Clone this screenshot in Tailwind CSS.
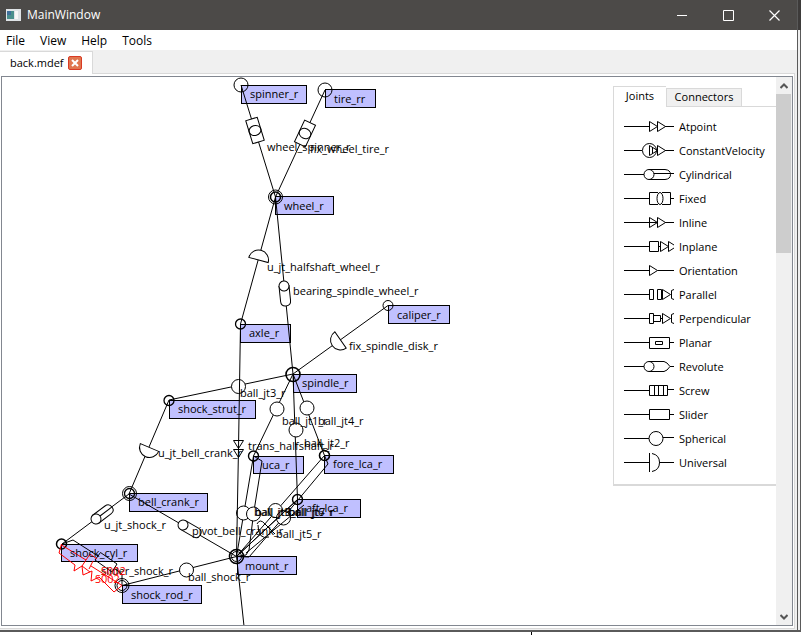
<!DOCTYPE html>
<html lang="en">
<head>
<meta charset="utf-8">
<title>MainWindow</title>
<script src="https://cdn.jsdelivr.net/npm/@tailwindcss/browser@4"></script>
</head>
<body class="flex h-screen flex-col overflow-hidden bg-white font-['Open_Sans','Noto_Sans',sans-serif] text-[11px] text-black">
<div class="flex min-h-0 flex-1 border-b-2 border-[#5a5a5a]">
  <div class="flex min-w-0 flex-1 flex-col bg-[#f0f0f0]">
    <header class="flex h-[30px] shrink-0 items-center bg-[#4c4a48] pl-[6px] text-white">
      <svg class="shrink-0" width="15" height="12" viewBox="0 0 15 12" aria-hidden="true">
        <rect width="15" height="12" fill="#dfe3e6"/><rect x="1" y="2" width="7" height="8" fill="#4a8f8c"/><rect x="1" y="2" width="4" height="4" fill="#3f6f9a"/><rect x="9" y="2" width="3" height="8" fill="#f7f7f7"/>
      </svg>
      <h1 class="flex-1 pl-[6px] text-xs">MainWindow</h1>
      <button class="flex h-[30px] w-[46px] items-center justify-center" aria-label="Minimize"><svg width="11" height="11"><path d="M0 5.500H10" stroke="#fff"/></svg></button>
      <button class="flex h-[30px] w-[46px] items-center justify-center" aria-label="Maximize"><svg width="11" height="11"><path d="M.5 .5H10.500V10.500H.5Z" fill="none" stroke="#fff"/></svg></button>
      <button class="flex h-[30px] w-[46px] items-center justify-center" aria-label="Close"><svg width="11" height="11"><path d="M.5 .5L10.500 10.500M10.500 .5L.5 10.500" stroke="#fff" stroke-width="1.2"/></svg></button>
    </header>
    <nav class="flex h-5 shrink-0 items-center gap-[15px] bg-white px-[6px] pt-[2px] text-xs">
      <button>File</button><button>View</button><button>Help</button><button>Tools</button>
    </nav>
    <div class="flex h-6 shrink-0 pt-px">
      <div class="flex w-[93px] items-center gap-1 border-t border-r border-[#d9d9d9] bg-white pl-[10px]">
        <button>back.mdef</button>
        <button class="flex size-[14px] items-center justify-center rounded-[2px] border border-[#d93a24] bg-[#e0764f]" aria-label="Close tab"><svg width="8" height="8"><path d="M1 1L7 7M7 1L1 7" stroke="#fff" stroke-width="2"/></svg></button>
      </div>
      <div class="mr-[2px] flex-1 border-b border-[#d9d9d9]"></div>
    </div>
    <main class="mr-[2px] flex min-h-0 flex-1 border-r border-b border-[#d9d9d9] bg-white pt-[2px] pr-[1px] pb-[2px] pl-[1px]">
      <div class="flex min-w-0 flex-1 border border-[#828790]">
        <div class="relative flex min-w-0 flex-1 items-start justify-end overflow-hidden">
          <svg class="absolute top-0 left-0" width="774" height="548" viewBox="2 77 774 548" fill="none" stroke="#000" aria-label="Suspension linkage diagram">
            <defs>
              <g id="fixed"><path fill="#fff" d="M0 -6H-12V6H0H12V-6Z"/><ellipse rx="5" ry="6"/></g>
              <path id="half" fill="#fff" d="M-10 0A10 10 0 0 1 10 0Z"/>
              <g id="rev"><path fill="#fff" d="M0 -5H15Q20 -5 20 0Q20 5 15 5H0Z"/><circle r="5" fill="#fff"/></g>
            </defs>
            <g fill="#c0c0ff">
              <rect x="241.5" y="85.500" width="65" height="18"/><rect x="325.5" y="89.500" width="50" height="18"/>
              <rect x="275.5" y="196.500" width="58" height="18"/><rect x="240.500" y="324.500" width="50" height="18"/>
              <rect x="388.500" y="305.500" width="61" height="18"/><rect x="293.500" y="374.500" width="63" height="18"/>
              <rect x="169.500" y="400.500" width="86" height="18"/><rect x="253.500" y="456.500" width="50" height="17"/>
              <rect x="324.500" y="455.500" width="69" height="18"/><rect x="297.500" y="499.500" width="63" height="18"/>
              <rect x="129.500" y="493.500" width="78" height="18"/><rect x="61.500" y="544.500" width="76" height="17"/>
              <rect x="122.500" y="585.500" width="79" height="18"/><rect x="237.500" y="556.500" width="59" height="18"/>
            </g>
            <g>
              <path d="M241 85L275.500 197L325 90M275.500 197L240.500 324M275.500 197L293 374L388 305.500M169 400L293 374M169 400L129 494L236.500 556.500L122 585.500M129 494L62 544"/>
              <path d="M293 374L253.500 456L236.500 556.500M293 374L324.500 455.500L236.500 556.500M293 374L297.500 499.500L236.500 556.500"/>
              <path d="M253.500 456L262 461L253.500 514L249 550L246 555L236.500 556.500M324.500 455.500L328 464L283 518L249 557L236.500 556.500"/>
              <path d="M62 544L73 540L98 556M114 568L122 574V585M236.500 556.500L244 626"/>
            </g>
            <use href="#fixed" transform="translate(255 130.500) rotate(73)"/>
            <use href="#fixed" transform="translate(305 133.500) rotate(115)"/>
            <use href="#half" transform="translate(258.500 260) rotate(15)"/>
            <use href="#half" transform="translate(340.500 340) rotate(235)"/>
            <use href="#half" transform="translate(149.500 447.500) rotate(203)"/>
            <use href="#rev" transform="translate(284 286) rotate(84)"/>
            <use href="#rev" transform="translate(183 525) rotate(30)"/>
            <g transform="translate(96 519) rotate(-37)"><use href="#rev"/><path d="M5 0H20"/></g>
            <path d="M100.500 552.500L117 564L112 572L95 560Z"/>
            <g fill="#fff"><circle cx="238.500" cy="386.500" r="7"/><circle cx="277" cy="409" r="7"/><circle cx="307" cy="408" r="7"/><circle cx="296" cy="430" r="7"/><circle cx="186.500" cy="570" r="7"/><circle cx="243.500" cy="513" r="7"/><circle cx="253.500" cy="514" r="7"/><circle cx="275.500" cy="510.500" r="7"/><circle cx="283.500" cy="518" r="7"/></g>
            <path d="M257 524Q260 518 265 524L275 534M258 525Q258 540 269 537M297.500 499.500L236.500 556.500M304 505L246 553"/>
            <path d="M240.500 324L238.500 448L236.500 556.500M233.500 440.500H243.500L238.500 448.500ZM233.500 449.500H243.500L238.500 457.500Z"/>
            <circle cx="241" cy="85" r="7"/><circle cx="325" cy="90" r="7"/>
            <circle cx="275.500" cy="197" r="7"/><circle cx="275.500" cy="197" r="5" stroke-width="1.500"/>
            <circle cx="240.500" cy="324" r="5" stroke-width="1.300"/><circle cx="388" cy="305.500" r="5"/>
            <circle cx="293" cy="374.500" r="7" stroke-width="1.600"/><circle cx="169" cy="400.500" r="5" stroke-width="1.300"/>
            <circle cx="253.500" cy="456" r="5" stroke-width="1.400"/><circle cx="324.500" cy="455.500" r="5" stroke-width="1.600"/><circle cx="297.500" cy="499.500" r="5" stroke-width="1.400"/>
            <circle cx="129.500" cy="493.500" r="7"/><circle cx="129.500" cy="493.500" r="5" stroke-width="1.300"/>
            <circle cx="61.500" cy="544" r="5" stroke-width="1.500"/>
            <circle cx="122" cy="585.500" r="7"/><circle cx="122" cy="585.500" r="5"/>
            <circle cx="236.500" cy="556.500" r="7" stroke-width="1.600"/><circle cx="236.500" cy="556.500" r="5"/>
            <path stroke="#f00" d="M61.500 544L59 553L75 565L74 571L82 566L83 575L92 571L91 581L99 577L114 592L122 585.500M61.500 545L86 560M82 566L90 554L97 559M82 566L90 572M93 561L89 569M91 566L122 585.500"/>
            <g stroke="none" fill="#000" class="text-[11px]">
              <text x="250" y="98">spinner_r</text><text x="334" y="103">tire_rr</text><text x="284" y="210">wheel_r</text><text x="249" y="337">axle_r</text>
              <text x="397" y="319">caliper_r</text><text x="302" y="387">spindle_r</text><text x="178" y="413">shock_strut_r</text><text x="262" y="469">uca_r</text>
              <text x="333" y="468">fore_lca_r</text><text x="306" y="512">aft_lca_r</text><text x="138" y="506">bell_crank_r</text><text x="70" y="557">shock_cyl_r</text>
              <text x="131" y="599">shock_rod_r</text><text x="245" y="570">mount_r</text>
              <text x="267" y="151">wheel_spinner_r</text><text x="310" y="153">fix_wheel_tire_r</text><text x="267" y="271">u_jt_halfshaft_wheel_r</text>
              <text x="293" y="295">bearing_spindle_wheel_r</text><text x="349" y="350">fix_spindle_disk_r</text><text x="240" y="397">ball_jt3_r</text>
              <text x="282" y="425">ball_jt1_r</text><text x="318" y="425">ball_jt4_r</text><text x="304" y="447">ball_jt2_r</text><text x="248" y="450">trans_halfshaft_r</text>
              <text x="158" y="457">u_jt_bell_crank_r</text><text x="104" y="529">u_jt_shock_r</text><text x="192" y="535">pivot_bell_crank_r</text>
              <text x="188" y="581">ball_shock_r</text><text x="101" y="575">slider_shock_r</text><text x="276" y="538">ball_jt5_r</text>
              <text x="254" y="516">ball_jt9_r</text><text x="255" y="516">ball_jt8_r</text><text x="288" y="516">ball_jt6_r</text><text x="289" y="516">ball_jt7_r</text>
              <text x="95" y="583" fill="#f00">S002</text><text x="101" y="575" fill="#f00">S002</text>
            </g>
          </svg>
          <section class="relative mt-[9px] w-[163px]" aria-label="Palette">
            <div class="flex h-5 items-end">
              <button class="h-5 w-[53px] border-t border-l border-[#d9d9d9] bg-white">Joints</button>
              <button class="h-[18px] w-[76px] border border-b-0 border-[#d9d9d9] bg-[#f0f0f0]">Connectors</button>
            </div>
            <div class="flex"><div class="w-[53px] border-l border-[#d9d9d9]"></div><div class="h-px flex-1 bg-[#d9d9d9]"></div></div>
            <ul class="border-b-2 border-l border-[#d9d9d9] bg-white pt-2 pb-[9px] pl-[10px] leading-6 whitespace-nowrap">
              <li class="flex h-6 items-center gap-[5px]"><svg width="50" height="20" fill="none" stroke="#000"><path d="M0 9.500H25M25.500 4.500V14.500L33.500 9.500ZM33.500 4.500V14.500L41.500 9.500ZM41 9.500H50"/></svg>Atpoint</li>
              <li class="flex h-6 items-center gap-[5px]"><svg width="50" height="20" fill="none" stroke="#000"><path d="M0 9.500H18M25.500 4.500V14.500L33.500 9.500ZM33.500 4.500V14.500L41.500 9.500ZM41 9.500H50M28.500 6V13"/><circle cx="25.500" cy="9.500" r="7"/></svg>ConstantVelocity</li>
              <li class="flex h-6 items-center gap-[5px]"><svg width="50" height="20" fill="none" stroke="#000"><path d="M0 9.500H20M25 4.500H41Q46.500 5 46.500 9.500Q46.500 14 41 14.500H25M30 8.500H50"/><circle cx="25" cy="9.500" r="5"/></svg>Cylindrical</li>
              <li class="flex h-6 items-center gap-[5px]"><svg width="50" height="20" fill="none" stroke="#000"><path d="M0 9.500H25M34 3.500H25.500V15.500H34M38 3.500H46.500V15.500H38M46 9.500H50"/><ellipse cx="36" cy="9.500" rx="3" ry="6" fill="#fff"/></svg>Fixed</li>
              <li class="flex h-6 items-center gap-[5px]"><svg width="50" height="20" fill="none" stroke="#000"><path d="M0 9.500H33M25.500 4.500V14.500L33.500 9.500ZM33.500 4.500V14.500L41.500 9.500ZM41 9.500H50"/></svg>Inline</li>
              <li class="flex h-6 items-center gap-[5px]"><svg width="50" height="20" fill="none" stroke="#000"><path d="M0 9.500H25M25.500 4.500H34.500V14.500H25.500ZM34 9.500H36M36.500 4.500V14.500L44.500 9.500ZM44.500 9.500V4.500L50 8M44.500 9V14.500L50 11"/></svg>Inplane</li>
              <li class="flex h-6 items-center gap-[5px]"><svg width="50" height="20" fill="none" stroke="#000"><path d="M0 9.500H25M25.500 4.500V14.500L33.500 9.500ZM33.500 9.500H50"/></svg>Orientation</li>
              <li class="flex h-6 items-center gap-[5px]"><svg width="50" height="20" fill="none" stroke="#000"><path d="M0 9.500H25M25.500 4.500H29.500V14.500H25.500ZM33.500 4.500H37.500V14.500H33.500ZM38.500 4.500V14.500L46.500 9.500ZM50 4.500L47.500 5.500V13.500L50 14.500"/></svg>Parallel</li>
              <li class="flex h-6 items-center gap-[5px]"><svg width="50" height="20" fill="none" stroke="#000"><path d="M0 9.500H25M25.500 4.500H29.500V14.500H25.500ZM29.500 6.500H36.500V12.500H29.500M36 9.500H38M38.500 4.500V14.500L46.500 9.500ZM50 4.500L47.500 5.500V13.500L50 14.500"/></svg>Perpendicular</li>
              <li class="flex h-6 items-center gap-[5px]"><svg width="50" height="20" fill="none" stroke="#000"><path d="M0 9.500H25M25.500 4.500H45.500V15.500H25.500ZM31.500 8.500H38.500V11.500H31.500ZM46 9.500H50"/></svg>Planar</li>
              <li class="flex h-6 items-center gap-[5px]"><svg width="50" height="20" fill="none" stroke="#000"><path d="M0 9.500H20M25 4.500H40Q43 5 46 9.500Q43 14 40 14.500H25M46 9.500H50"/><circle cx="25" cy="9.500" r="5"/></svg>Revolute</li>
              <li class="flex h-6 items-center gap-[5px]"><svg width="50" height="20" fill="none" stroke="#000"><path d="M0 9.500H25M25.500 4.500H43.500V14.500H25.500ZM30.500 4V15M34.500 4V15M39.500 4V15M44 8.500H50"/></svg>Screw</li>
              <li class="flex h-6 items-center gap-[5px]"><svg width="50" height="20" fill="none" stroke="#000"><path d="M0 9.500H25M25.500 4.500H45.500V14.500H25.500ZM46 9.500H50"/></svg>Slider</li>
              <li class="flex h-6 items-center gap-[5px]"><svg width="50" height="20" fill="none" stroke="#000"><path d="M0 9.500H25M39 8.500H50"/><circle cx="32" cy="9.500" r="7"/></svg>Spherical</li>
              <li class="flex h-6 items-center gap-[5px]"><svg width="50" height="20" fill="none" stroke="#000"><path d="M0 9.500H25M25.500 0V19M28 .5Q35.500 2 35.500 9.500Q35.500 17 28 18.500M35 9.500H50"/></svg>Universal</li>
            </ul>
          </section>
        </div>
        <div class="flex w-4 shrink-0 flex-col bg-[#f0f0f0]" aria-label="Vertical scroll bar">
          <button class="flex h-[17px] items-center justify-center" aria-label="Scroll up"><svg width="8" height="6"><path d="M.5 5L4 1.500L7.500 5" fill="none" stroke="#555" stroke-width="2"/></svg></button>
          <div class="min-h-0 flex-1"><div class="mr-px h-[31%] bg-[#cdcdcd]"></div></div>
          <button class="flex h-[17px] items-center justify-center" aria-label="Scroll down"><svg width="8" height="6"><path d="M.5 1L4 4.500L7.500 1" fill="none" stroke="#555" stroke-width="2"/></svg></button>
        </div>
      </div>
    </main>
    <div class="h-px shrink-0 bg-[#f0f0f0]"></div>
  </div>
  <div class="flex w-1 flex-col">
    <div class="h-[30px] border-l border-[#5a5a5a] bg-[#3d3b3a]"></div>
    <div class="flex-1 border-x border-[#5a5a5a] bg-[#f0f0f0]"></div>
  </div>
</div>
<div class="flex h-[3px] shrink-0"><div class="w-[532px] border-r border-black"></div></div>
</body>
</html>
